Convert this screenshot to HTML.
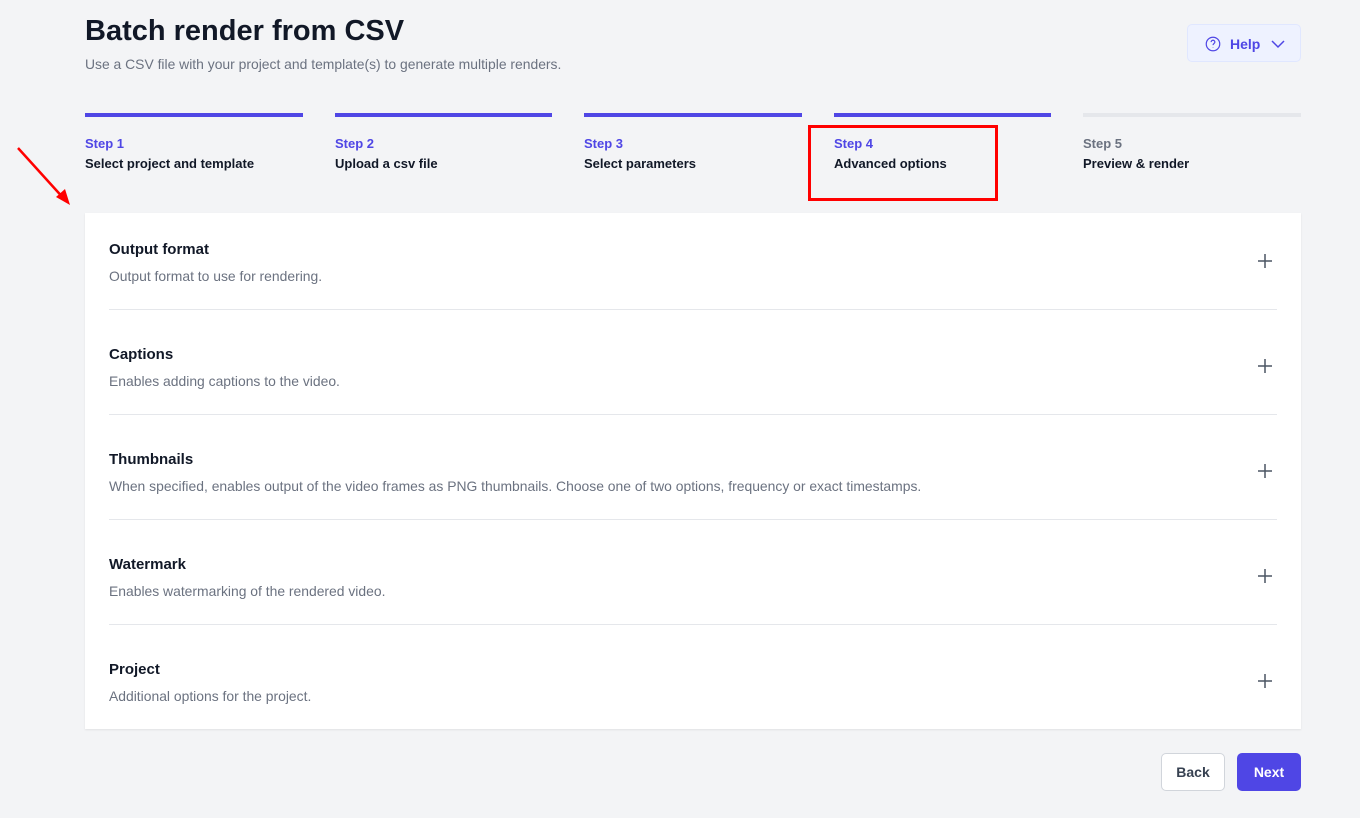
<!DOCTYPE html>
<html><head><style>
*{box-sizing:border-box;margin:0;padding:0}
body{width:1360px;height:818px;background:#f3f4f6;font-family:"Liberation Sans",sans-serif;position:relative;overflow:hidden;color:#111827}
h1{position:absolute;left:85px;top:15px;font-size:29px;font-weight:700;color:#111827}
.sub{position:absolute;left:85px;top:56px;font-size:13.9px;color:#6b7280}
.help{position:absolute;left:1187px;top:24px;width:114px;height:38px;background:#eef2ff;border:1px solid #e0e7ff;border-radius:5px;color:#4f46e5;font-size:14px;font-weight:600}
.step{position:absolute;top:113px;width:218px;border-top:4px solid #4f46e5;padding-top:19px}
.step .n{font-size:13px;color:#4f46e5;font-weight:600}
.step .t{font-size:13px;color:#111827;font-weight:600;margin-top:5px}
.card{position:absolute;left:85px;top:213px;width:1216px;height:516px;background:#fff;box-shadow:0 1px 2px rgba(0,0,0,.08)}
.row{position:absolute;left:24px;width:1168px;height:105px}
.sep{position:absolute;left:24px;width:1168px;height:1px;background:#e5e7eb}
.row .h{position:absolute;top:28px;font-size:15px;font-weight:600;color:#111827}
.row .d{position:absolute;top:55px;font-size:13.9px;color:#6b7280}
.row .p{position:absolute;right:4px;top:40px;width:16px;height:16px}
.btn{position:absolute;top:753px;height:38px;border-radius:5px;font-size:14px;font-weight:600;display:flex;align-items:center;justify-content:center}
</style></head><body>
<h1>Batch render from CSV</h1>
<div class="sub">Use a CSV file with your project and template(s) to generate multiple renders.</div>
<div class="help"><svg style="position:absolute;left:16px;top:10px" width="18" height="18" viewBox="0 0 24 24" fill="none" stroke="#4f46e5" stroke-width="1.6"><circle cx="12" cy="12" r="9"/><path d="M9.5 9.5a2.5 2.5 0 115 0c0 1.5-2.5 2-2.5 4M12 16.5v.5"/></svg><span style="position:absolute;left:42px;top:11px">Help</span><svg style="position:absolute;left:82px;top:12px" width="16" height="14" viewBox="0 0 16 14" fill="none" stroke="#4f46e5" stroke-width="1.5"><path d="M2 4l6 6 6-6"/></svg></div>
<div class="step" style="left:85px"><div class="n">Step 1</div><div class="t">Select project and template</div></div>
<div class="step" style="left:335px;width:217px"><div class="n">Step 2</div><div class="t">Upload a csv file</div></div>
<div class="step" style="left:584px"><div class="n">Step 3</div><div class="t">Select parameters</div></div>
<div class="step" style="left:834px;width:217px"><div class="n">Step 4</div><div class="t">Advanced options</div></div>
<div class="step" style="left:1083px;border-color:#e5e7eb"><div class="n" style="color:#6b7280">Step 5</div><div class="t">Preview &amp; render</div></div>
<div style="position:absolute;left:808px;top:125px;width:190px;height:76px;border:3px solid #f00"></div>
<svg style="position:absolute;left:14px;top:145px" width="60" height="62"><path d="M4 3L52 56" stroke="#f00" stroke-width="2.5"/><path d="M56 60L42 52L51 44Z" fill="#f00"/></svg>
<div class="card">
<div class="row" style="top:0"><div class="h">Output format</div><div class="d">Output format to use for rendering.</div><svg class="p" viewBox="0 0 16 16" stroke="#4b5563" stroke-width="1.5"><path d="M8 1v14M1 8h14"/></svg></div>
<div class="sep" style="top:96px"></div>
<div class="row" style="top:105px"><div class="h">Captions</div><div class="d">Enables adding captions to the video.</div><svg class="p" viewBox="0 0 16 16" stroke="#4b5563" stroke-width="1.5"><path d="M8 1v14M1 8h14"/></svg></div>
<div class="sep" style="top:201px"></div>
<div class="row" style="top:210px"><div class="h">Thumbnails</div><div class="d">When specified, enables output of the video frames as PNG thumbnails. Choose one of two options, frequency or exact timestamps.</div><svg class="p" viewBox="0 0 16 16" stroke="#4b5563" stroke-width="1.5"><path d="M8 1v14M1 8h14"/></svg></div>
<div class="sep" style="top:306px"></div>
<div class="row" style="top:315px"><div class="h">Watermark</div><div class="d">Enables watermarking of the rendered video.</div><svg class="p" viewBox="0 0 16 16" stroke="#4b5563" stroke-width="1.5"><path d="M8 1v14M1 8h14"/></svg></div>
<div class="sep" style="top:411px"></div>
<div class="row" style="top:420px"><div class="h">Project</div><div class="d">Additional options for the project.</div><svg class="p" viewBox="0 0 16 16" stroke="#4b5563" stroke-width="1.5"><path d="M8 1v14M1 8h14"/></svg></div>
</div>
<div class="btn" style="left:1161px;width:64px;background:#fff;border:1px solid #d1d5db;color:#374151">Back</div>
<div class="btn" style="left:1237px;width:64px;background:#4f46e5;color:#fff">Next</div>
</body></html>
